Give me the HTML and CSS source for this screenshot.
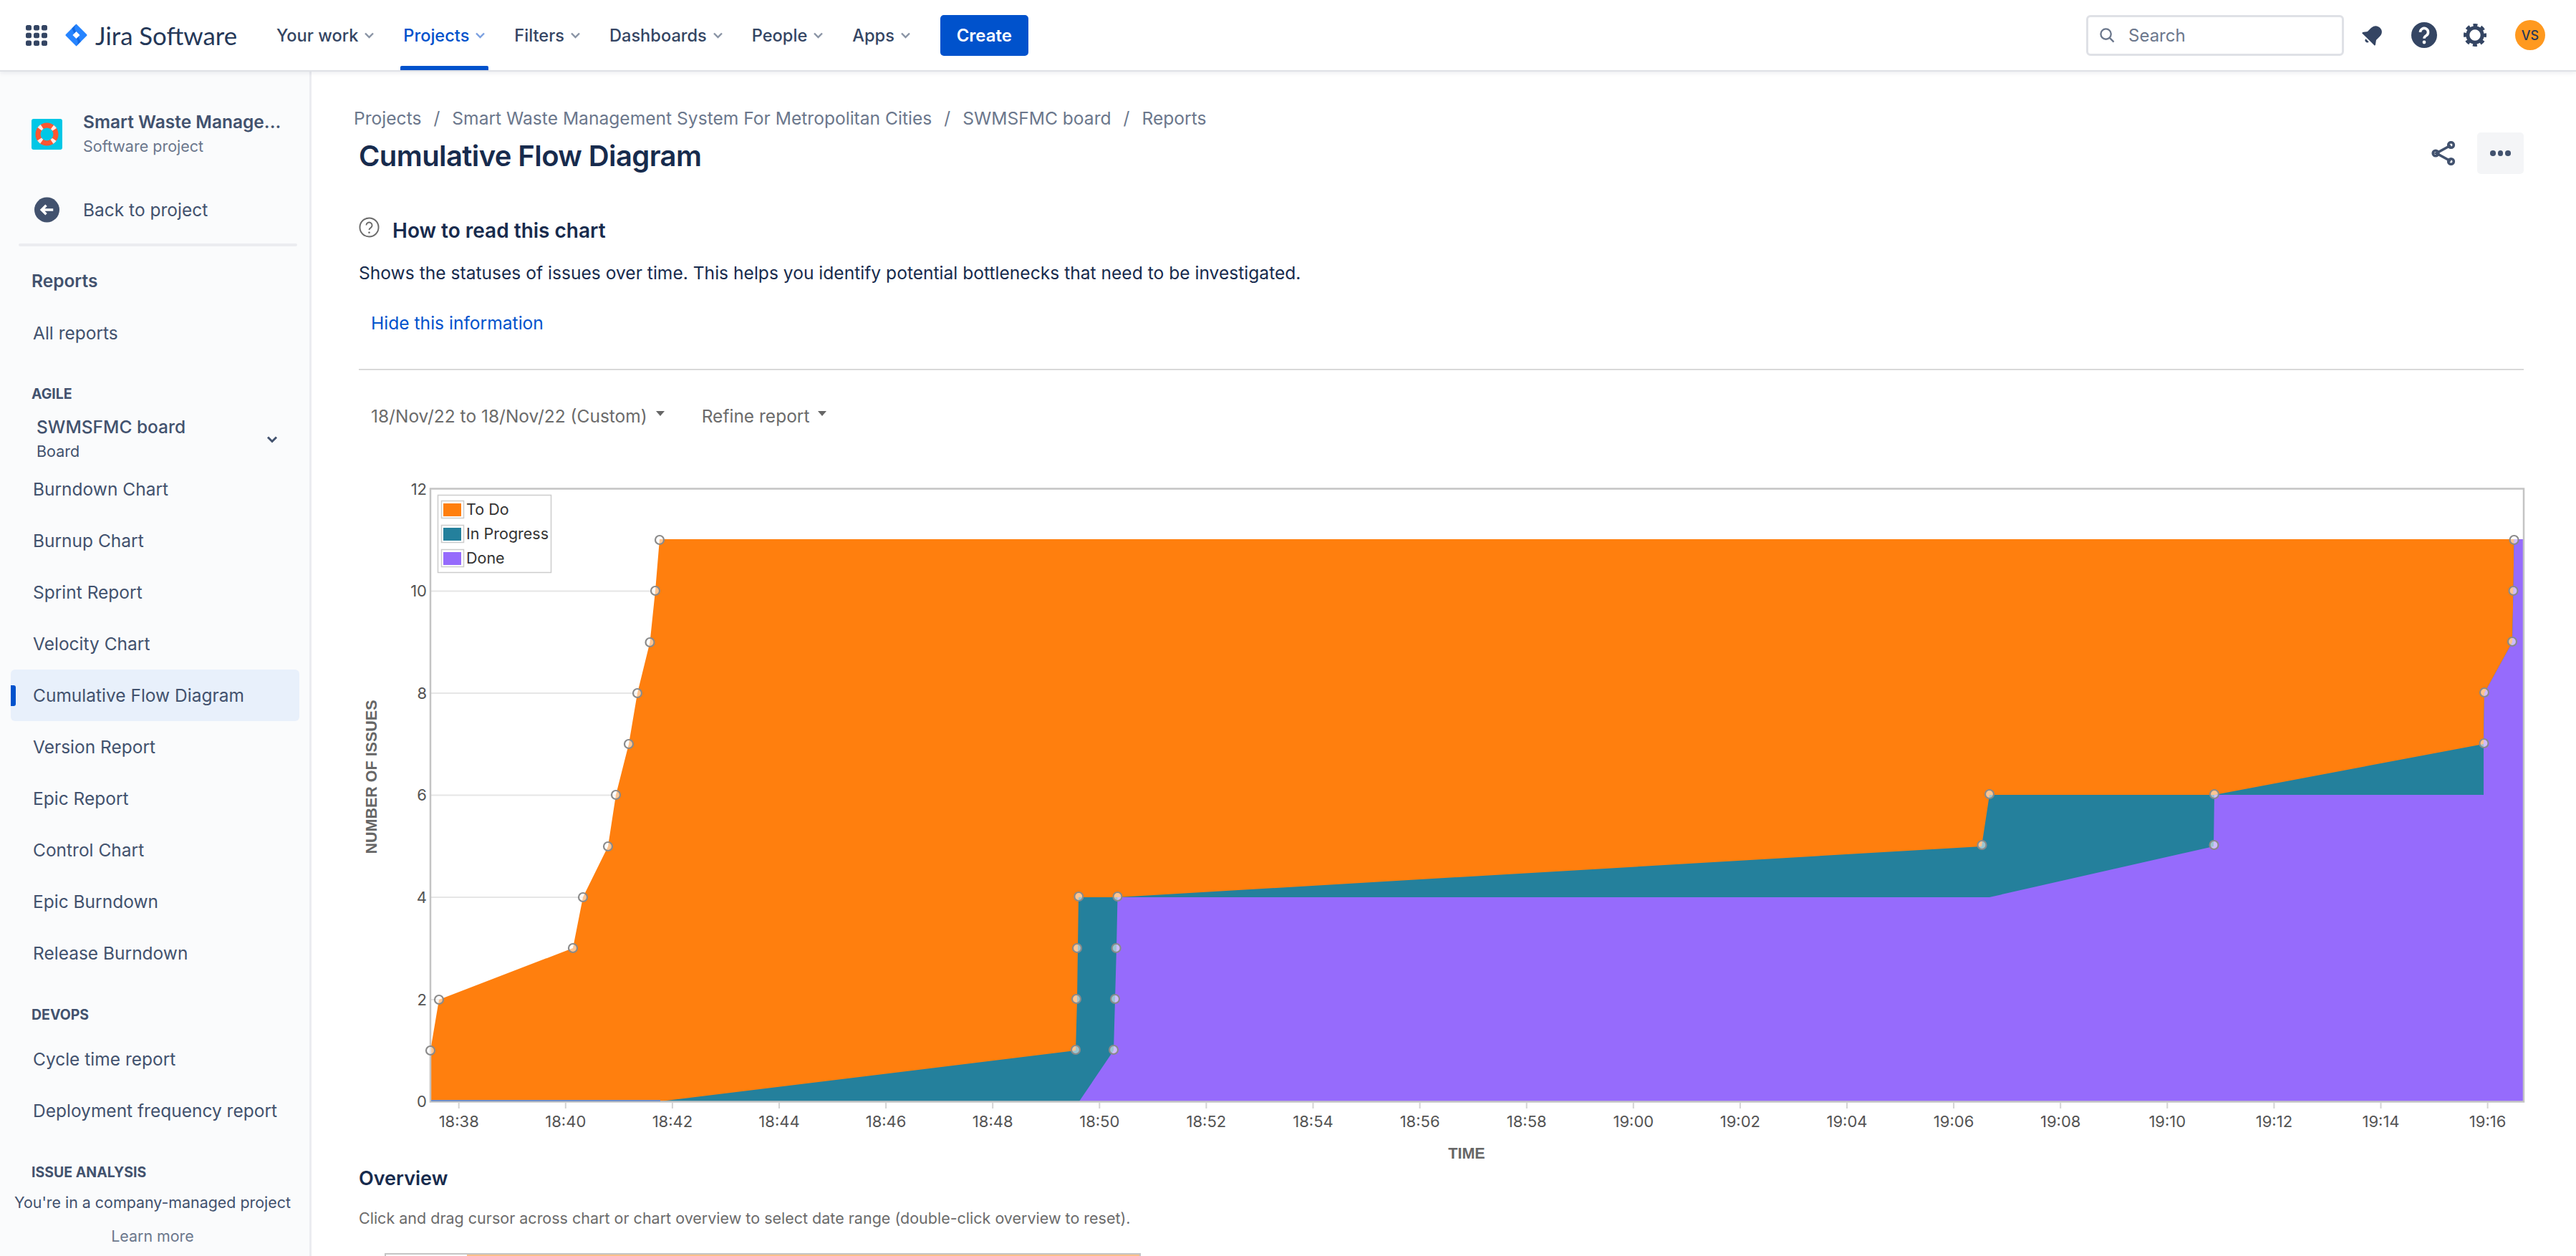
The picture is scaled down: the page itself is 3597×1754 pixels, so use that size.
FILE: index.html
```html
<!DOCTYPE html>
<html lang="en">
<head>
    <meta charset="UTF-8">
    <meta name="viewport" content="width=device-width, initial-scale=1.0">
    <title>Cumulative Flow Diagram</title>
    <link rel="stylesheet" href="styles.css">
</head>
<body>
    <header class="topbar">
        <svg class="apps-icon" viewBox="0 0 30 29"><g fill="#344563"><rect width="8" height="7.5" rx="2.5"/><rect x="11" width="8" height="7.5" rx="2.5"/><rect x="22" width="8" height="7.5" rx="2.5"/><rect y="10.7" width="8" height="7.5" rx="2.5"/><rect x="11" y="10.7" width="8" height="7.5" rx="2.5"/><rect x="22" y="10.7" width="8" height="7.5" rx="2.5"/><rect y="21.5" width="8" height="7.5" rx="2.5"/><rect x="11" y="21.5" width="8" height="7.5" rx="2.5"/><rect x="22" y="21.5" width="8" height="7.5" rx="2.5"/></g></svg>
        <svg class="jira-mark" viewBox="0 0 32 32">
            <path fill="#2684ff" d="M16 0 31 15a1.4 1.4 0 0 1 0 2L16 32 1 17a1.4 1.4 0 0 1 0-2Z"/>
            <path fill="#0052cc" opacity=".55" d="M16 11c-3-3-3-7.500 0-11L9.500 6.500 13 13.500ZM16 21c3 3 3 7.500 0 11l6.500-6.500L19 18.500Z"/>
            <path fill="#fff" d="M16 10.800 21.200 16 16 21.200 10.800 16Z"/>
        </svg>
        <span class="jira-name">Jira Software</span>
        <nav class="topnav">
            <a class="topnav-item">Your work<svg class="chev" viewBox="0 0 15 10"><path d="M2 2.500 7.500 8 13 2.500"/></svg></a>
            <a class="topnav-item active">Projects<svg class="chev" viewBox="0 0 15 10"><path d="M2 2.500 7.500 8 13 2.500"/></svg></a>
            <a class="topnav-item">Filters<svg class="chev" viewBox="0 0 15 10"><path d="M2 2.500 7.500 8 13 2.500"/></svg></a>
            <a class="topnav-item">Dashboards<svg class="chev" viewBox="0 0 15 10"><path d="M2 2.500 7.500 8 13 2.500"/></svg></a>
            <a class="topnav-item">People<svg class="chev" viewBox="0 0 15 10"><path d="M2 2.500 7.500 8 13 2.500"/></svg></a>
            <a class="topnav-item">Apps<svg class="chev" viewBox="0 0 15 10"><path d="M2 2.500 7.500 8 13 2.500"/></svg></a>
        </nav>
        <button class="create-btn">Create</button>
        <div class="search-box">
            <svg class="search-icon" viewBox="0 0 22 22"><circle cx="9" cy="9" r="7.500"/><path d="M14.500 14.500 20.500 20.500"/></svg>
            <span>Search</span>
        </div>
        <svg class="bell-icon" viewBox="0 0 32 32"><g transform="rotate(45 16 16)"><path fill="#344563" d="M16 1.500c-5.500 0-8.500 4-8.500 9v7L3.500 23v1.500h25V23l-4-5.500v-7c0-5-3-9-8.500-9Z"/><path fill="#344563" d="M13 26.500h6a3 3 0 0 1-6 0Z"/></g></svg>
        <svg class="help-icon" viewBox="0 0 36 36"><circle cx="18" cy="18" r="18" fill="#344563"/><path d="M12.500 14a5.500 5.500 0 1 1 8.300 4.700c-1.900 1.100-2.800 2-2.800 4" fill="none" stroke="#fff" stroke-width="3.600"/><circle cx="18" cy="28" r="2.400" fill="#fff"/></svg>
        <svg class="gear-icon" viewBox="0 0 32 32"><circle cx="16" cy="16" r="10.200" fill="none" stroke="#344563" stroke-width="5"/><circle cx="16" cy="16" r="14" fill="none" stroke="#344563" stroke-width="4" stroke-dasharray="6 5" stroke-dashoffset="3"/></svg>
        <div class="avatar">VS</div>
    </header>

    <div class="layout">
        <aside class="sidebar">
            <div class="project">
                <svg class="project-icon" viewBox="0 0 43 43">
                    <rect width="43" height="43" rx="3" fill="#00c7e6"/>
                    <circle cx="21.500" cy="21.500" r="12.500" fill="none" stroke="#ff5630" stroke-width="7"/>
                    <circle cx="21.500" cy="21.500" r="12.500" fill="none" stroke="#ffebe6" stroke-width="7" stroke-dasharray="4.500 15.130" stroke-dashoffset="-7.570"/>
                </svg>
                <div>
                    <div class="project-name">Smart Waste Manage...</div>
                    <div class="project-type">Software project</div>
                </div>
            </div>
            <a class="back-link">
                <svg class="back-icon" viewBox="0 0 36 36"><circle cx="18" cy="18" r="18" fill="#42526e"/><path d="M27 18H11M17 11.500 10.500 18 17 24.500" fill="none" stroke="#fff" stroke-width="3.600"/></svg>
                Back to project
            </a>
            <div class="side-divider"></div>
            <div class="side-title">Reports</div>
            <a class="side-item first">All reports</a>
            <div class="side-group">Agile</div>
            <div class="board-picker">
                <div>
                    <div class="board-name">SWMSFMC board</div>
                    <div class="board-type">Board</div>
                </div>
                <svg class="board-chev" viewBox="0 0 16 11"><path d="M2 2.500 8 8.500 14 2.500"/></svg>
            </div>
            <a class="side-item">Burndown Chart</a>
            <a class="side-item">Burnup Chart</a>
            <a class="side-item">Sprint Report</a>
            <a class="side-item">Velocity Chart</a>
            <a class="side-item selected">Cumulative Flow Diagram</a>
            <a class="side-item">Version Report</a>
            <a class="side-item">Epic Report</a>
            <a class="side-item">Control Chart</a>
            <a class="side-item">Epic Burndown</a>
            <a class="side-item">Release Burndown</a>
            <div class="side-group devops">DevOps</div>
            <a class="side-item">Cycle time report</a>
            <a class="side-item">Deployment frequency report</a>
            <div class="side-group issue">Issue analysis</div>
            <div class="side-footer">
                <div>You're in a company-managed project</div>
                <div class="learn-more">Learn more</div>
            </div>
        </aside>

        <main class="content">
            <div class="breadcrumbs">
                <a>Projects</a><span class="sep">/</span><a>Smart Waste Management System For Metropolitan Cities</a><span class="sep">/</span><a>SWMSFMC board</a><span class="sep">/</span><a>Reports</a>
            </div>
            <div class="title-row">
                <h1>Cumulative Flow Diagram</h1>
                <div class="title-actions">
                    <svg class="share-icon" viewBox="0 0 34 34"><path d="M27 6 7 17 27 28"/><circle cx="27.500" cy="5.500" r="3.800"/><circle cx="6" cy="17" r="3.800"/><circle cx="27.500" cy="28.500" r="3.800"/></svg>
                    <button class="more-btn"><i></i><i></i><i></i></button>
                </div>
            </div>

            <div class="howto">
                <svg class="howto-icon" viewBox="0 0 30 30"><circle cx="15" cy="15" r="13.500" fill="none" stroke="#6b6b6b" stroke-width="2"/><path d="M10.800 12a4.200 4.200 0 1 1 6.400 3.600c-1.500.9-2.200 1.500-2.200 3" fill="none" stroke="#6b6b6b" stroke-width="2"/><circle cx="15" cy="22.500" r="1.400" fill="#6b6b6b"/></svg>
                <h2>How to read this chart</h2>
            </div>
            <p class="howto-text">Shows the statuses of issues over time. This helps you identify potential bottlenecks that need to be investigated.</p>
            <a class="hide-link">Hide this information</a>
            <hr class="rule">

            <div class="filters">
                <a class="filter">18/Nov/22 to 18/Nov/22 (Custom)</a>
                <a class="filter">Refine report</a>
            </div>

            <svg class="chart" viewBox="501 640 3026 990">
                <g class="grid">
                    <path d="M601 1396H3524M601 1253H3524M601 1110.500H3524M601 968H3524M601 825.500H3524"/>
                </g>
                <polygon fill="#ff7f0e" points="601,1538 601,1467 613,1396 800,1324 814,1253 849,1182 860,1110 878,1039 890,968 907.500,897 915,825 921,753 3524,753 3524,1538"/>
                <polygon fill="#24809c" points="922,1538 1502,1467 1504,1396 1505,1324 1506,1253 1560,1253 2767,1182 2778,1110 3092,1110 3468,1039 3469,968 3508,897 3509.500,825 3510.500,753 3524,753 3524,1538"/>
                <polygon fill="#966bfc" points="1507,1538 1555,1467 1557,1396 1559,1324 1560.500,1253 2778,1253 3091,1182 3092,1110 3468,1110 3468,1039 3469,968 3508,897 3509.500,825 3510.500,753 3524,753 3524,1538"/>
                <path class="plot-frame" d="M601 682.500H3524V1538.500H601Z"/>
                <path class="base-line" d="M602 1537H922"/>
                <path class="ticks" d="M640.700 1539v9M789.800 1539v9M938.900 1539v9M1088 1539v9M1237.100 1539v9M1386.200 1539v9M1535.300 1539v9M1684.400 1539v9M1833.500 1539v9M1982.600 1539v9M2131.700 1539v9M2280.800 1539v9M2429.900 1539v9M2579 1539v9M2728.100 1539v9M2877.200 1539v9M3026.300 1539v9M3175.400 1539v9M3324.500 1539v9M3473.600 1539v9"/>

                <g class="markers">
                    <circle cx="601" cy="1467" r="6"/><circle cx="613" cy="1396" r="6"/><circle cx="800" cy="1324" r="6"/><circle cx="814" cy="1253" r="6"/><circle cx="849" cy="1182" r="6"/><circle cx="860" cy="1110" r="6"/><circle cx="878" cy="1039" r="6"/><circle cx="890" cy="968" r="6"/><circle cx="907.500" cy="897" r="6"/><circle cx="915" cy="825" r="6"/><circle cx="921" cy="754" r="6"/>
                    <circle cx="1502" cy="1466" r="6"/><circle cx="1503" cy="1395" r="6"/><circle cx="1504" cy="1324" r="6"/><circle cx="1506.300" cy="1252" r="6"/>
                    <circle cx="1555" cy="1466" r="6"/><circle cx="1557" cy="1395" r="6"/><circle cx="1558.600" cy="1324" r="6"/><circle cx="1560.500" cy="1252" r="6"/>
                    <circle cx="2767.500" cy="1180" r="6"/><circle cx="2778" cy="1109" r="6"/><circle cx="3092" cy="1109" r="6"/><circle cx="3091.500" cy="1180" r="6"/>
                    <circle cx="3468.500" cy="1038" r="6"/><circle cx="3469" cy="967" r="6"/><circle cx="3508" cy="896" r="6"/><circle cx="3509.500" cy="825" r="6"/><circle cx="3510.600" cy="754" r="6"/>
                </g>

                <g class="y-labels">
                    <text x="596" y="1546">0</text><text x="596" y="1404">2</text><text x="596" y="1261">4</text><text x="596" y="1118">6</text><text x="596" y="976">8</text><text x="596" y="833">10</text><text x="596" y="691">12</text>
                </g>
                <g class="x-labels">
                    <text x="640.700" y="1574">18:38</text><text x="789.800" y="1574">18:40</text><text x="938.900" y="1574">18:42</text><text x="1088" y="1574">18:44</text><text x="1237.100" y="1574">18:46</text><text x="1386.200" y="1574">18:48</text><text x="1535.300" y="1574">18:50</text><text x="1684.400" y="1574">18:52</text><text x="1833.500" y="1574">18:54</text><text x="1982.600" y="1574">18:56</text><text x="2131.700" y="1574">18:58</text><text x="2280.800" y="1574">19:00</text><text x="2429.900" y="1574">19:02</text><text x="2579" y="1574">19:04</text><text x="2728.100" y="1574">19:06</text><text x="2877.200" y="1574">19:08</text><text x="3026.300" y="1574">19:10</text><text x="3175.400" y="1574">19:12</text><text x="3324.500" y="1574">19:14</text><text x="3473.600" y="1574">19:16</text>
                </g>
                <text class="axis-title" x="2048" y="1618" text-anchor="middle">TIME</text>
                <text class="axis-title" transform="translate(526 1085) rotate(-90)" text-anchor="middle">NUMBER OF ISSUES</text>

                <g class="legend">
                    <rect class="legend-box" x="611.500" y="691.500" width="158" height="108"/>
                    <rect class="legend-key" x="616.500" y="699.500" width="31" height="24"/>
                    <rect x="619" y="703" width="25" height="18" fill="#ff7f0e"/>
                    <text x="651" y="719">To Do</text>
                    <rect class="legend-key" x="616.500" y="733.500" width="31" height="24"/>
                    <rect x="619" y="737" width="25" height="18" fill="#24809c"/>
                    <text x="651" y="753">In Progress</text>
                    <rect class="legend-key" x="616.500" y="767.500" width="31" height="24"/>
                    <rect x="619" y="771" width="25" height="18" fill="#966bfc"/>
                    <text x="651" y="787">Done</text>
                </g>
            </svg>

            <h3>Overview</h3>
            <p class="overview-text">Click and drag cursor across chart or chart overview to select date range (double-click overview to reset).</p>
            <div class="mini-chart"><div class="mini-fill"></div></div>
        </main>
    </div>
</body>
</html>
```

FILE: styles.css
```css
* {
    box-sizing: border-box;
}
html, body {
    height: 100%;
}
body {
    margin: 0;
    overflow: hidden;
    display: flex;
    flex-direction: column;
    font-family: Inter, "Liberation Sans", sans-serif;
    font-size: 24.500px;
    color: #172b4d;
    background: #fff;
}

/* top bar */
.topbar {
    flex: none;
    height: 100px;
    display: flex;
    align-items: center;
    padding-left: 36px;
    border-bottom: 2px solid #dfe1e6;
    box-shadow: 0 2px 6px rgba(9, 30, 66, 0.08);
    position: relative;
    z-index: 1;
    background: #fff;
}
.apps-icon {
    width: 30px;
    height: 29px;
    margin-right: 25px;
}
.jira-mark {
    width: 31px;
    height: 32px;
    margin-right: 11px;
}
.jira-name {
    font-family: Lato, sans-serif;
    font-size: 34.800px;
    color: #253858;
    width: 219px;
    white-space: nowrap;
}
.topnav {
    display: flex;
    height: 98px;
    margin-left: 30px;
}
.topnav-item {
    display: flex;
    align-items: center;
    gap: 8px;
    padding: 0 4px;
    margin-right: 32px;
    color: #344563;
    font-weight: 500;
    font-size: 23.600px;
    position: relative;
    white-space: nowrap;
}
.topnav-item.active {
    color: #0052cc;
}
.topnav-item.active::after {
    content: "";
    position: absolute;
    left: 0;
    right: 0;
    bottom: 0;
    height: 6px;
    background: #0052cc;
    border-radius: 2px 2px 0 0;
}
.chev {
    width: 15px;
    height: 10px;
    fill: none;
    stroke: #8993a4;
    stroke-width: 2.4;
}
.active .chev {
    stroke: #7a9fe0;
}
.create-btn {
    width: 123px;
    height: 57px;
    margin-left: 5px;
    border: none;
    border-radius: 5px;
    background: #0052cc;
    color: #fff;
    font: 600 24px Inter, sans-serif;
}
.search-box {
    margin-left: auto;
    width: 360px;
    height: 57px;
    display: flex;
    align-items: center;
    gap: 19px;
    padding-left: 16px;
    border: 3px solid #dfe1e6;
    border-radius: 6px;
    color: #6b778c;
    font-size: 24px;
}
.search-icon {
    width: 21px;
    height: 21px;
    fill: none;
    stroke: #6b778c;
    stroke-width: 2.4;
}
.bell-icon {
    width: 32px;
    height: 32px;
    margin-left: 24px;
}
.help-icon {
    width: 36px;
    height: 36px;
    margin-left: 38px;
}
.gear-icon {
    width: 32px;
    height: 32px;
    margin-left: 37px;
}
.avatar {
    width: 42px;
    height: 42px;
    margin: 0 43px 0 40px;
    border-radius: 50%;
    background: #ff991f;
    color: #253858;
    font-size: 18px;
    font-weight: 500;
    display: flex;
    align-items: center;
    justify-content: center;
}

/* sidebar */
.layout {
    flex: 1;
    min-height: 0;
    display: flex;
}
.sidebar {
    flex: none;
    width: 435px;
    display: flex;
    flex-direction: column;
    background: #fafbfc;
    border-right: 3px solid #ebecf0;
    color: #42526e;
    overflow: hidden;
}
.project {
    display: flex;
    align-items: center;
    gap: 29px;
    height: 43px;
    margin: 66px 0 0 44px;
}
.project-icon {
    width: 43px;
    height: 43px;
}
.project-name {
    font-weight: 600;
    font-size: 24.500px;
    line-height: 32px;
    white-space: nowrap;
}
.project-type {
    padding-top: 2px;
    color: #6b778c;
    font-size: 21.500px;
    line-height: 33px;
}
.back-link {
    display: flex;
    align-items: center;
    gap: 33px;
    height: 72px;
    margin: 48px 0 0 48px;
}
.back-icon {
    width: 35px;
    height: 36px;
}
.side-divider {
    height: 4px;
    margin: 11px 17px 0 26px;
    background: #ebecf0;
    border-radius: 2px;
}
.side-title {
    margin: 30px 0 0 44px;
    line-height: 36px;
    font-weight: 600;
}
.side-item {
    display: flex;
    align-items: center;
    flex: none;
    height: 72px;
    margin: 0 14px 0 15px;
    padding-left: 31px;
    border-radius: 6px;
    position: relative;
    white-space: nowrap;
}
.side-item.first {
    margin-top: 19px;
}
.side-item.selected {
    background: #e8f0fb;
}
.side-item.selected::before {
    content: "";
    position: absolute;
    left: 0;
    top: 22px;
    width: 7px;
    height: 29px;
    background: #0052cc;
    border-radius: 0 3px 3px 0;
}
.side-group {
    margin: 34px 0 0 44px;
    line-height: 30px;
    font-size: 19.500px;
    font-weight: 700;
    text-transform: uppercase;
}
.side-group.devops {
    margin-top: 35px;
    margin-bottom: 11px;
}
.side-group.issue {
    margin-top: 35px;
}
.board-picker {
    display: flex;
    align-items: center;
    justify-content: space-between;
    margin: 14px 44px 0 51px;
}
.board-name {
    font-weight: 500;
    line-height: 34px;
}
.board-type {
    font-size: 21.500px;
    line-height: 34px;
}
.board-chev {
    width: 16px;
    height: 11px;
    fill: none;
    stroke: #42526e;
    stroke-width: 3;
}
.side-footer {
    margin-top: auto;
    padding: 0 6px 11px 0;
    text-align: center;
    font-size: 21.400px;
    line-height: 34px;
    white-space: nowrap;
}
.learn-more {
    margin-top: 13px;
    color: #6b778c;
}

/* main area */
.content {
    flex: 1;
    min-width: 0;
    padding: 47px 73px 0 66px;
    overflow: hidden;
    font-size: 24.600px;
}
.breadcrumbs {
    display: flex;
    margin-left: -7px;
    line-height: 36px;
    color: #6b778c;
}
.sep {
    margin: 0 17px;
}
.title-row {
    display: flex;
    justify-content: space-between;
    height: 58px;
    margin-top: 2px;
}
h1 {
    margin: 0;
    padding-top: 5px;
    font-size: 40px;
    letter-spacing: -0.6px;
    line-height: 56px;
    font-weight: 600;
}
.title-actions {
    display: flex;
    align-items: center;
    gap: 30px;
}
.share-icon {
    width: 34px;
    height: 34px;
    fill: none;
    stroke: #42526e;
    stroke-width: 3.600;
}
.more-btn {
    width: 65px;
    height: 58px;
    border: none;
    border-radius: 5px;
    background: #f4f5f7;
    display: flex;
    align-items: center;
    justify-content: center;
    gap: 3px;
}
.more-btn i {
    width: 7.500px;
    height: 7.500px;
    border-radius: 50%;
    background: #42526e;
}
.howto {
    display: flex;
    align-items: flex-start;
    gap: 18px;
    height: 40px;
    margin-top: 59px;
}
.howto-icon {
    width: 29px;
    height: 29px;
    margin-top: 1px;
}
h2 {
    margin: 0;
    font-size: 28px;
    line-height: 40px;
    font-weight: 600;
}
.howto-text {
    margin: 21px 0 0;
    line-height: 36px;
}
.hide-link {
    display: block;
    margin: 34px 0 0 17px;
    line-height: 36px;
    color: #0052cc;
}
.rule {
    height: 2px;
    margin: 46px 0 0;
    border: none;
    background: #d9d9d9;
}
.filters {
    display: flex;
    gap: 52px;
    margin: 46px 0 0 17px;
    line-height: 36px;
    font-size: 24.500px;
    color: #6b6b6b;
}
.filter {
    display: flex;
    align-items: center;
    gap: 12px;
}
.filter::after {
    content: "";
    border-left: 6.500px solid transparent;
    border-right: 6.500px solid transparent;
    border-top: 7px solid #666;
    margin-bottom: 8px;
}

/* chart */
.chart {
    display: block;
    width: 3026px;
    height: 990px;
    margin-top: 41px;
}
.grid path {
    fill: none;
    stroke: #e6e6e6;
    stroke-width: 2;
}
.plot-frame {
    fill: none;
    stroke: #c4c4c4;
    stroke-width: 2.500;
}
.base-line {
    stroke: #6f8fc9;
    stroke-width: 2;
}
.ticks {
    fill: none;
    stroke: #d4d4d4;
    stroke-width: 2;
}
.markers circle {
    fill: rgba(255, 255, 255, 0.55);
    stroke: #8a8a8a;
    stroke-width: 2.200;
}
.y-labels text {
    font-size: 22px;
    fill: #545454;
    text-anchor: end;
}
.x-labels text {
    font-size: 22px;
    fill: #545454;
    text-anchor: middle;
}
.axis-title {
    font-family: "Liberation Sans", sans-serif;
    font-size: 21.500px;
    font-weight: 700;
    fill: #666;
}
.legend-box {
    fill: #fff;
    stroke: #ccc;
    stroke-width: 1.500;
}
.legend-key {
    fill: #fff;
    stroke: #ccc;
    stroke-width: 1.500;
}
.legend text {
    font-size: 21.500px;
    fill: #333;
}
h3 {
    margin: -4px 0 0;
    font-size: 27px;
    line-height: 40px;
    font-weight: 600;
}
.overview-text {
    margin: 20px 0 0;
    line-height: 30px;
    font-size: 21.500px;
    color: #6b6b6b;
}
.mini-chart {
    display: flex;
    width: 1056px;
    height: 60px;
    margin: 34px 0 0 36px;
    padding-left: 113px;
    border: 2px solid #c4c4c4;
}
.mini-fill {
    flex: 1;
    background: #ffc08a;
}
```
